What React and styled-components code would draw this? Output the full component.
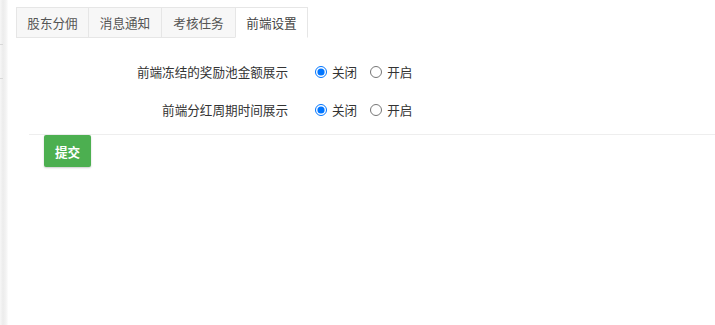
import React, { useState } from "react";
import styled, { createGlobalStyle } from "styled-components";

const Global = createGlobalStyle`
  html, body { margin: 0; padding: 0; background: #fff; }
  body { font-family: "Microsoft YaHei", "Noto Sans CJK SC", "Noto Sans", sans-serif; font-size: 12.6px; color: #333; }
  * { box-sizing: border-box; }
`;

const Page = styled.div`
  display: flex;
  width: 715px;
  height: 325px;
  overflow: hidden;
  background: #fff;
`;

const SideShadow = styled.div`
  width: 8px;
  flex: none;
  background: linear-gradient(to right, #f7f7f7 0px, #ececec 3px, #f3f3f3 6px, #fdfdfd 8px);
  display: flex;
  flex-direction: column;
`;

const SideLine = styled.div`
  height: 1px;
  width: 3px;
  background: #d8d8d8;
  margin-top: ${(p) => p.$top}px;
`;

const Main = styled.div`
  flex: 1;
  padding: 7px 0 0 8px;
  display: flex;
  flex-direction: column;
`;

const TabBar = styled.div`
  display: flex;
  height: 31px;
`;

const Tab = styled.div`
  height: 31px;
  padding: 0;
  display: flex;
  align-items: center;
  justify-content: center;
  white-space: nowrap;
  flex: none;
  font-size: 12.6px;
  color: ${(p) => (p.$active ? "#444" : "#555")};
  background: ${(p) => (p.$active ? "#fff" : "#f7f7f7")};
  border: 1px solid #e6e6e6;
  border-bottom-color: ${(p) => (p.$active ? "#fff" : "#e6e6e6")};
  margin-left: ${(p) => (p.$first ? "0" : "-1px")};
  width: ${(p) => p.$w}px;
`;

const Form = styled.div`
  padding-top: 14px;
  display: flex;
  flex-direction: column;
`;

const Row = styled.div`
  display: flex;
  align-items: center;
  height: 38px;
`;

const Label = styled.div`
  width: 272px;
  text-align: right;
  white-space: nowrap;
  font-size: 12.6px;
  color: #333;
  flex: none;
`;

const Options = styled.div`
  display: flex;
  align-items: center;
  margin-left: 27px;
`;

const Option = styled.label`
  display: flex;
  align-items: center;
  margin-right: ${(p) => (p.$last ? 0 : 13)}px;
  font-size: 12.6px;
  color: #333;
  cursor: pointer;
`;

const Radio = styled.input`
  margin: 1px 5px 0 0;
  width: 12px;
  height: 12px;
`;

const Divider = styled.div`
  height: 1px;
  background: #eeeeee;
  margin: 6px 0 0 13px;
`;

const Actions = styled.div`
  padding-left: 28px;
`;

const Submit = styled.button`
  width: 47px;
  height: 32px;
  border: none;
  border-radius: 2px;
  background: #4caf50;
  color: #fff;
  font-family: inherit;
  font-size: 12.6px;
  font-weight: bold;
  box-shadow: 0 1px 2px rgba(0, 0, 0, 0.2);
  cursor: pointer;
  padding: 0;
`;

const tabs = [
  { t: "股东分佣", w: 73 },
  { t: "消息通知", w: 74 },
  { t: "考核任务", w: 75 },
  { t: "前端设置", w: 73 },
];

const rows = [
  { key: "freeze", label: "前端冻结的奖励池金额展示" },
  { key: "cycle", label: "前端分红周期时间展示" },
];

export default function App() {
  const [vals, setVals] = useState({ freeze: "0", cycle: "0" });
  return (
    <Page>
      <Global />
      <SideShadow>
        <SideLine $top={44} />
        <SideLine $top={33} />
      </SideShadow>
      <Main>
        <TabBar>
          {tabs.map((tab, i) => (
            <Tab key={tab.t} $first={i === 0} $active={i === 3} $w={tab.w}>
              {tab.t}
            </Tab>
          ))}
        </TabBar>
        <Form>
          {rows.map((r) => (
            <Row key={r.key}>
              <Label>{r.label}</Label>
              <Options>
                <Option>
                  <Radio
                    type="radio"
                    name={r.key}
                    checked={vals[r.key] === "0"}
                    onChange={() => setVals({ ...vals, [r.key]: "0" })}
                  />
                  关闭
                </Option>
                <Option $last>
                  <Radio
                    type="radio"
                    name={r.key}
                    checked={vals[r.key] === "1"}
                    onChange={() => setVals({ ...vals, [r.key]: "1" })}
                  />
                  开启
                </Option>
              </Options>
            </Row>
          ))}
          <Divider />
          <Actions>
            <Submit>提交</Submit>
          </Actions>
        </Form>
      </Main>
    </Page>
  );
}
